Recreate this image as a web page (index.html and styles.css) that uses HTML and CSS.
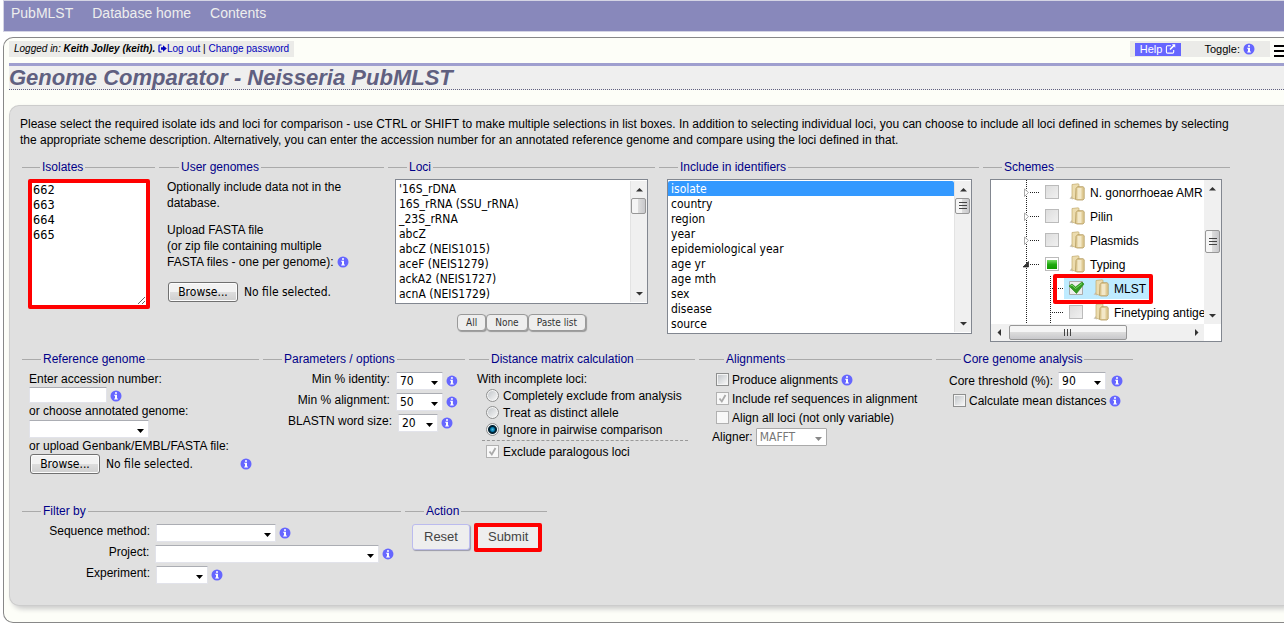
FILE: index.html
```html
<!DOCTYPE html>
<html lang="en">
<head>
<meta charset="utf-8">
<title>Genome Comparator - Neisseria PubMLST</title>
<link rel="stylesheet" href="styles.css">
</head>
<body>
<svg class="defs" aria-hidden="true">
  <symbol id="info" viewBox="0 0 12 12">
    <circle cx="6" cy="6" r="5.5" fill="#66f"/>
    <path d="M5 2.2h2v1.6H5zM4.2 4.8H7v3.8h.9v1H4.2v-1H5V5.8h-.8z" fill="#fff"/>
  </symbol>
  <symbol id="folder" viewBox="0 0 16 18">
    <path d="M3 13L.5 15.500 4 16.500z" fill="#c9c4b8"/>
    <path d="M3 1.500L9 .8q1 0 1 1V14l-3 2.500-4-1.500z" fill="#ecdcae" stroke="#c2a96c" stroke-width=".7"/>
    <path d="M7 5.500l1.500-1.800H14l1.200 1v11L14 17H7.500L6.500 16z" fill="#e0cb95" stroke="#b39a60" stroke-width=".8"/>
    <path d="M8.500 5h4v11h-4z" fill="#f3e8c8"/>
  </symbol>
  <symbol id="g-line" viewBox="0 0 24 24">
    <path d="M10.500 0v24" stroke="#222" stroke-dasharray="1 1"/>
  </symbol>
  <symbol id="g-leaf" viewBox="0 0 24 24">
    <path d="M10.500 0v24M12 12.500h11" stroke="#222" stroke-dasharray="1 1"/>
  </symbol>
  <symbol id="g-closed" viewBox="0 0 24 24">
    <path d="M10.500 0v24M14 12.500h9" stroke="#222" stroke-dasharray="1 1"/>
    <path d="M8.500 9l4 3.500-4 4z" fill="#fff" stroke="#aaa"/>
  </symbol>
  <symbol id="g-open" viewBox="0 0 24 24">
    <path d="M10.500 0v24M14 12.500h9" stroke="#222" stroke-dasharray="1 1"/>
    <path d="M12.500 9.500v5.500H7z" fill="#333" stroke="#111" stroke-width=".6"/>
  </symbol>
</svg>

<header class="topbar">
  <a href="#">PubMLST</a>
  <a href="#">Database home</a>
  <a href="#">Contents</a>
</header>

<main class="page">
  <div class="tools">
    <div class="login"><i>Logged in: <b>Keith Jolley (keith).</b></i>
      <a href="#"><svg class="exit" viewBox="0 0 9 9" aria-hidden="true"><path d="M3.500 1H1.800Q1 1 1 1.800v5.400Q1 8 1.800 8h1.700" fill="none" stroke="#00b" stroke-width="1.200"/><path d="M3 3.200h2V1.200L8.800 4.500 5 7.800v-2H3z" fill="#00b"/></svg>Log out</a> | <a href="#">Change password</a></div>
    <div class="toolset">
      <div class="helpbox">
        <a class="help" href="#">Help <svg class="ext" viewBox="0 0 11 11" aria-hidden="true"><path d="M6 2H2.200Q1 2 1 3.200v5.600Q1 10 2.200 10h5.600Q9 10 9 8.800V6.500" fill="none" stroke="#fff" stroke-width="1.200"/><path d="M7 .3h3.700V4L9.500 2.800 5.600 6.700l-1.300-1.300 3.900-3.900z" fill="#fff"/></svg></a>
        <span class="toggle">Toggle: <a href="#" aria-label="Toggle tooltips"><svg class="info"><use href="#info"/></svg></a></span>
      </div>
      <button class="menu" type="button" aria-label="Menu"><span></span><span></span><span></span></button>
    </div>
  </div>
  <h1>Genome Comparator - Neisseria PubMLST</h1>

  <form class="panel">
    <p class="intro">Please select the required isolate ids and loci for comparison - use CTRL or SHIFT to make multiple selections in list boxes. In addition to selecting individual loci, you can choose to include all loci defined in schemes by selecting the appropriate scheme description. Alternatively, you can enter the accession number for an annotated reference genome and compare using the loci defined in that.</p>

    <div class="row">
      <fieldset class="w-isolates">
        <legend>Isolates</legend>
        <textarea class="ids marked" aria-label="Isolates">662
663
664
665</textarea>
      </fieldset>

      <fieldset class="w-user">
        <legend>User genomes</legend>
        <p>Optionally include data not in the database.</p>
        <p>Upload FASTA file<br>(or zip file containing multiple<br>FASTA files - one per genome): <svg class="info"><use href="#info"/></svg></p>
        <div class="file"><input type="file" id="fasta"><label for="fasta">Browse...</label><span>No file selected.</span></div>
      </fieldset>

      <fieldset class="w-loci">
        <legend>Loci</legend>
        <div class="listbox">
          <select multiple size="8" aria-label="Loci">
            <option>'16S_rDNA</option><option>16S_rRNA (SSU_rRNA)</option><option>_23S_rRNA</option><option>abcZ</option><option>abcZ (NEIS1015)</option><option>aceF (NEIS1279)</option><option>ackA2 (NEIS1727)</option><option>acnA (NEIS1729)</option>
          </select>
          <div class="vbar"><i class="up"></i><i class="thumb plain"></i><i class="down"></i></div>
        </div>
        <div class="mini"><button type="button">All</button><button type="button">None</button><button type="button">Paste list</button></div>
      </fieldset>

      <fieldset class="w-ident">
        <legend>Include in identifiers</legend>
        <div class="listbox">
          <select multiple size="10" aria-label="Include in identifiers">
            <option selected>isolate</option><option>country</option><option>region</option><option>year</option><option>epidemiological year</option><option>age yr</option><option>age mth</option><option>sex</option><option>disease</option><option>source</option>
          </select>
          <div class="vbar"><i class="up"></i><i class="thumb"></i><i class="down"></i></div>
        </div>
      </fieldset>

      <fieldset class="w-schemes">
        <legend>Schemes</legend>
        <div class="treebox">
          <ul class="tree">
            <li><svg class="cell"><use href="#g-closed"/></svg><input type="checkbox" id="s1"><svg class="folder"><use href="#folder"/></svg><label for="s1">N. gonorrhoeae AMR</label></li>
            <li><svg class="cell"><use href="#g-closed"/></svg><input type="checkbox" id="s2"><svg class="folder"><use href="#folder"/></svg><label for="s2">Pilin</label></li>
            <li><svg class="cell"><use href="#g-closed"/></svg><input type="checkbox" id="s3"><svg class="folder"><use href="#folder"/></svg><label for="s3">Plasmids</label></li>
            <li><svg class="cell"><use href="#g-open"/></svg><input type="checkbox" id="s4" class="partial"><svg class="folder"><use href="#folder"/></svg><label for="s4">Typing</label></li>
            <li class="mlst"><svg class="cell"><use href="#g-line"/></svg><svg class="cell"><use href="#g-leaf"/></svg><span class="pick"><input type="checkbox" id="s5" checked><svg class="folder"><use href="#folder"/></svg><label for="s5">MLST</label></span></li>
            <li><svg class="cell"><use href="#g-line"/></svg><svg class="cell"><use href="#g-leaf"/></svg><input type="checkbox" id="s6"><svg class="folder"><use href="#folder"/></svg><label for="s6">Finetyping antige</label></li>
          </ul>
          <div class="vbar"><i class="up"></i><i class="thumb mid"></i><i class="down"></i></div>
          <div class="hbar"><i class="left"></i><i class="hthumb"></i><i class="right"></i></div>
        </div>
      </fieldset>
    </div>

    <div class="row">
      <fieldset class="w-ref">
        <legend>Reference genome</legend>
        <label for="acc">Enter accession number:</label>
        <div class="line short"><input type="text" class="text" id="acc"><svg class="info"><use href="#info"/></svg></div>
        <label for="ann">or choose annotated genome:</label>
        <select class="drop w120" id="ann"></select>
        <label for="gb">or upload Genbank/EMBL/FASTA file:</label>
        <div class="file"><input type="file" id="gb"><label for="gb">Browse...</label><span>No file selected.</span><svg class="info end"><use href="#info"/></svg></div>
      </fieldset>

      <fieldset class="w-params">
        <legend>Parameters / options</legend>
        <div class="line params"><label for="p1">Min % identity:</label><select class="drop w48" id="p1"><option>70</option></select><svg class="info"><use href="#info"/></svg></div>
        <div class="line params"><label for="p2">Min % alignment:</label><select class="drop w48" id="p2"><option>50</option></select><svg class="info"><use href="#info"/></svg></div>
        <div class="line params"><label for="p3">BLASTN word size:</label><select class="drop w40" id="p3"><option>20</option></select><svg class="info"><use href="#info"/></svg></div>
      </fieldset>

      <fieldset class="w-dist">
        <legend>Distance matrix calculation</legend>
        <div>With incomplete loci:</div>
        <div class="choice"><input type="radio" name="inc" id="r1"><label for="r1">Completely exclude from analysis</label></div>
        <div class="choice"><input type="radio" name="inc" id="r2"><label for="r2">Treat as distinct allele</label></div>
        <div class="choice"><input type="radio" name="inc" id="r3" checked><label for="r3">Ignore in pairwise comparison</label></div>
        <div class="choice parted"><input type="checkbox" id="c1" checked disabled><label for="c1">Exclude paralogous loci</label></div>
      </fieldset>

      <fieldset class="w-align">
        <legend>Alignments</legend>
        <div class="choice tall"><input type="checkbox" id="a1"><label for="a1">Produce alignments</label><svg class="info"><use href="#info"/></svg></div>
        <div class="choice tall"><input type="checkbox" id="a2" checked disabled><label for="a2">Include ref sequences in alignment</label></div>
        <div class="choice tall"><input type="checkbox" id="a3" disabled><label for="a3">Align all loci (not only variable)</label></div>
        <div class="line aligner"><label for="a4">Aligner:</label><select class="drop w71" id="a4" disabled><option>MAFFT</option></select></div>
      </fieldset>

      <fieldset class="w-core">
        <legend>Core genome analysis</legend>
        <div class="line core"><label for="k1">Core threshold (%):</label><select class="drop w48" id="k1"><option>90</option></select><svg class="info"><use href="#info"/></svg></div>
        <div class="choice tall"><input type="checkbox" id="k2"><label for="k2">Calculate mean distances</label><svg class="info"><use href="#info"/></svg></div>
      </fieldset>
    </div>

    <div class="row last">
      <fieldset class="w-filter">
        <legend>Filter by</legend>
        <div class="line filter"><label for="f1">Sequence method:</label><select class="drop w120" id="f1"></select><svg class="info"><use href="#info"/></svg></div>
        <div class="line filter"><label for="f2">Project:</label><select class="drop w225" id="f2"></select><svg class="info"><use href="#info"/></svg></div>
        <div class="line filter"><label for="f3">Experiment:</label><select class="drop w52" id="f3"></select><svg class="info"><use href="#info"/></svg></div>
      </fieldset>
      <fieldset class="w-action">
        <legend>Action</legend>
        <div class="actions"><button type="reset">Reset</button><button type="submit" class="marked">Submit</button></div>
      </fieldset>
    </div>
  </form>
</main>
</body>
</html>
```
FILE: styles.css
```css
*, *::after { box-sizing: border-box; }

body {
  margin: 0;
  padding: 0 0 11px 3px;
  overflow-x: hidden;
  background: #fff;
  color: #000;
  font: 12px/16px "Liberation Sans", Arial, sans-serif;
}

a { color: #00b; text-decoration: none; }
p { margin: 0; }
.defs { position: absolute; width: 0; height: 0; }

.topbar {
  display: flex;
  gap: 19px;
  height: 32px;
  padding: 4px 7px;
  border: 1px solid #d4d4e4;
  border-right: 0;
  background: #88b;
  font-size: 14px;
}
.topbar a { color: #eee; }

.page {
  margin-top: 5px;
  padding: 3px 0 16px 5px;
  border: 1px solid #888;
  border-right: 0;
  border-radius: 10px 0 0 10px;
  background: #fdfef8;
}

.tools {
  display: flex;
  justify-content: space-between;
  height: 22px;
}
.login, .helpbox { height: 16px; padding: 0 5px; background: #ebebe8; white-space: nowrap; }
.login { font-size: 10px; }
.exit { width: 9px; height: 9px; vertical-align: -1px; }
.toolset { display: flex; gap: 4px; font-size: 11px; }
.helpbox { display: flex; align-items: center; gap: 23px; padding-right: 15px; }
.help { height: 13px; padding: 0 5px; background: #66f; color: #fff; line-height: 13px; }
.ext { width: 11px; height: 10px; vertical-align: -1px; }

.menu {
  display: flex;
  flex-direction: column;
  gap: 3px;
  width: 10px;
  margin: 0;
  padding: 4px 0 0;
  border: 0;
  background: none;
}
.menu span { height: 2px; background: #000; }

h1 {
  margin: 0 0 15px;
  border-top: 3px solid #9f9fcf;
  border-bottom: 1px dotted #606080;
  background: #efefef;
  color: #606080;
  font: italic bold 22px/23px "Liberation Sans", Arial, sans-serif;
}

.panel {
  padding: 10px 16px 19px 10px;
  border: 1px solid #ccc;
  border-right: 0;
  border-radius: 10px 0 0 10px;
  background: #e0e0e0;
  box-shadow: 3px 3px 5px #ccc;
}
.intro { margin-bottom: 11px; padding-right: 8px; text-wrap: wrap; padding-right: 24px; }

.row { display: flex; align-items: flex-start; gap: 4px; margin: 0 0 9px 2px; }
.row.last { margin: 29px 0 0 2px; }

fieldset {
  flex: none;
  min-width: 0;
  margin: 0;
  padding: 4px 7px 0;
  border: 0 solid #aaa;
  border-top-width: 1px;
}
legend { margin-left: 12px; padding: 0 2px; color: #008; }

.w-isolates { width: 133px; padding-left: 6px; }
.w-user { width: 225px; }
.w-loci { width: 267px; }
.w-ident { width: 320px; }
.w-schemes { width: 247px; }
.w-ref { width: 237px; }
.w-params { width: 202px; }
.w-dist { width: 226px; }
.w-align { width: 233px; padding: 3px 7px 0 13px; }
.w-core { width: 197px; padding-left: 13px; }
.w-filter { width: 379px; }
.w-action { width: 142px; }

.info { width: 12px; height: 12px; vertical-align: -2px; }

.marked { border: 4px solid #f00; border-radius: 2px; }

.ids {
  display: block;
  width: 122px;
  height: 130px;
  padding: 0 1px;
  background: #fff;
  font: 12px/15px "DejaVu Sans Mono", monospace;
}

.w-user { padding: 4px 8px 0; }
.w-user p { margin-bottom: 11px; }

.file {
  position: relative;
  display: flex;
  align-items: center;
  height: 20px;
  font: 12px/16px "DejaVu Sans Condensed", "Noto Sans", sans-serif;
}
.w-user .file { margin-top: 12px; }
.file input { position: absolute; width: 1px; height: 1px; opacity: 0; }
.file label {
  width: 70px;
  margin: 0 6px 0 1px;
  border: 1px solid #707070;
  border-radius: 3px;
  background: linear-gradient(#f2f2f2 0 50%, #ddd 50%, #cfcfcf);
  box-shadow: inset 0 0 0 1px #fcfcfc;
  line-height: 18px;
  text-align: center;
}
.end { margin-left: auto; }

.listbox {
  display: flex;
  margin: 0 0 0 1px;
  padding: 1px 0;
  border: 1px solid #828790;
  background: #fff;
}
.w-loci .listbox { margin: 0; }
.listbox select {
  flex: 1;
  min-width: 0;
  margin: 0;
  padding: 0;
  border: 0;
  outline: 0;
  overflow: hidden;
  background: #fff;
  font: 12px/15px "DejaVu Sans Condensed", "Noto Sans", sans-serif;
}
.w-loci select { height: 121px; }
.w-ident select { height: 151px; }
.listbox option { height: 15px; min-height: 15px; padding: 1px 3px 0; line-height: 15px; color: #000; }
.listbox option:checked { background: linear-gradient(#39f, #39f); -webkit-text-fill-color: #fff; }

.vbar {
  display: flex;
  flex-direction: column;
  width: 17px;
  border-left: 1px solid #e3e3e3;
  background: #f0f0f0;
}
.up, .down, .left, .right { flex: none; width: 16px; height: 17px; background: center / 7px 7px no-repeat; }
.up { background-image: url("data:image/svg+xml,%3Csvg xmlns='http://www.w3.org/2000/svg' viewBox='0 0 7 7'%3E%3Cpath d='M0 5.500L3.500 2 7 5.500z' fill='%23333'/%3E%3C/svg%3E"); }
.down { margin-top: auto; background-image: url("data:image/svg+xml,%3Csvg xmlns='http://www.w3.org/2000/svg' viewBox='0 0 7 7'%3E%3Cpath d='M0 2L3.500 5.500 7 2z' fill='%23333'/%3E%3C/svg%3E"); }
.left { background-image: url("data:image/svg+xml,%3Csvg xmlns='http://www.w3.org/2000/svg' viewBox='0 0 7 7'%3E%3Cpath d='M5 0L1.500 3.500 5 7z' fill='%23333'/%3E%3C/svg%3E"); }
.right { margin-left: auto; background-image: url("data:image/svg+xml,%3Csvg xmlns='http://www.w3.org/2000/svg' viewBox='0 0 7 7'%3E%3Cpath d='M2 0L5.500 3.500 2 7z' fill='%23333'/%3E%3C/svg%3E"); }
.thumb, .hthumb {
  flex: none;
  width: 15px;
  height: 16px;
  border: 1px solid #979797;
  border-radius: 2px;
  background: url("data:image/svg+xml,%3Csvg xmlns='http://www.w3.org/2000/svg' viewBox='0 0 8 8'%3E%3Cpath d='M0 .5h8M0 3.500h8M0 6.500h8' stroke='%23444'/%3E%3C/svg%3E") center / 8px 8px no-repeat, linear-gradient(90deg, #f5f5f5 0 45%, #dcdcdc 50%, #c8c8cb);
}
.plain { background: linear-gradient(90deg, #f5f5f5 0 45%, #dcdcdc 50%, #c8c8cb); }
.mid { height: 23px; margin-top: 33px; }

.mini { display: flex; justify-content: center; margin-top: 10px; }
.mini button {
  height: 17px;
  margin: 0;
  padding: 0 8px;
  border: 1px solid #999;
  border-radius: 4px;
  background: #eee;
  box-shadow: 1px 1px 1px #999;
  color: #333;
  font: 10px/14px "DejaVu Sans Condensed", "Noto Sans", sans-serif;
}

.treebox {
  display: grid;
  grid-template-columns: 1fr 17px;
  grid-template-rows: 144px 17px;
  width: 232px;
  border: 1px solid #828790;
  background: #fff;
}
.tree { margin: 0; padding: 0 0 0 25px; overflow: hidden; list-style: none; }
.tree li { display: flex; align-items: center; height: 24px; white-space: nowrap; }
.tree .cell { flex: none; width: 24px; height: 24px; }
.tree input { margin: 0 10px 0 5px; }
.tree label { padding-top: 1px; }
.folder { flex: none; width: 16px; height: 18px; margin-right: 5px; }
.pick { display: flex; align-items: center; height: 22px; padding-right: 6px; background: #beebff; }
.mlst { position: relative; }
.mlst::after {
  content: "";
  position: absolute;
  left: 37px;
  top: -2px;
  width: 100px;
  height: 30px;
  border: 4px solid #f00;
  border-radius: 2px;
  pointer-events: none;
}
.treebox .vbar { border: 0; align-items: center; }
.hbar { display: flex; align-items: center; background: #f0f0f0; }
.hthumb {
  width: 118px;
  height: 15px;
  margin-left: 2px;
  background: url("data:image/svg+xml,%3Csvg xmlns='http://www.w3.org/2000/svg' viewBox='0 0 8 8'%3E%3Cpath d='M.5 0v7M3.500 0v7M6.500 0v7' stroke='%23444'/%3E%3C/svg%3E") center / 8px 8px no-repeat, linear-gradient(#f5f5f5 0 45%, #dcdcdc 50%, #c8c8cb);
}

input[type="checkbox"], input[type="radio"] {
  flex: none;
  width: 13px;
  height: 13px;
  appearance: none;
  border: 1px solid #8e8f8f;
  background: linear-gradient(135deg, #c3c7cb, #f6f6f6) content-box, #f4f4f4;
  padding: 1px;
}
input[type="checkbox"]:disabled { border-color: #b1b1b1; background: #f8f8f8; }
input[type="checkbox"]:checked:disabled {
  background: #f8f8f8 url("data:image/svg+xml,%3Csvg xmlns='http://www.w3.org/2000/svg' viewBox='0 0 11 11'%3E%3Cpath d='M2.500 5.500l2.300 3L8.500 2' fill='none' stroke='%23aaa' stroke-width='1.800'/%3E%3C/svg%3E") center / 11px 11px no-repeat;
}
input[type="radio"] { border-radius: 50%; }
input[type="radio"]:checked { background: radial-gradient(circle at center, #5bd 0, #07a 2px, #023 3px, #023 4px, #f4f4f4 5px); }
.tree input[type="checkbox"] { width: 14px; height: 14px; border-color: #bbb; background: linear-gradient(135deg, #ddd, #f0f0f0); }
.tree input[type="checkbox"].partial {
  background: linear-gradient(#7d6, #2a1 50%, #190) center / 10px 9px no-repeat, #fff;
}
.tree input[type="checkbox"]:checked {
  width: 16px;
  margin: 0 8px 0 5px;
  border-color: transparent;
  background: url("data:image/svg+xml,%3Csvg xmlns='http://www.w3.org/2000/svg' viewBox='0 0 16 14'%3E%3Cpath d='M.5.5h13v13H.5z' fill='%23eee' stroke='%23aaa'/%3E%3Cpath d='M0 5l3-2 3.500 3L13 1l2 2-7.500 9.500z' fill='%23392' stroke='%23281' stroke-width='.6'/%3E%3Cpath d='M1.500 5l1.500-.8L6.500 7.500 13 2.500' fill='none' stroke='%237d6'/%3E%3C/svg%3E") border-box center / 16px 14px no-repeat;
}

.line { display: flex; gap: 6px; }
.line .info { margin-top: 4px; }
.text { width: 78px; height: 16px; padding: 0 2px; border: 1px solid #e2e3ea; border-top-color: #abadb3; background: #fff; }
.line.short { gap: 3px; }
.short .info { margin: 3px 0 0; }

.drop {
  display: block;
  height: 18px;
  margin: 1px 0 0;
  padding: 0 3px;
  appearance: none;
  border: 1px solid #e2e3ea;
  border-top-color: #abadb3;
  border-radius: 1px;
  background: #fff url("data:image/svg+xml,%3Csvg xmlns='http://www.w3.org/2000/svg' viewBox='0 0 7 4'%3E%3Cpath d='M0 0h7L3.500 4z'/%3E%3C/svg%3E") right 4px bottom 4px / 7px 4px no-repeat;
  color: #000;
  font: 12px/16px "DejaVu Sans Condensed", "Noto Sans", sans-serif;
}
.drop:disabled {
  border-color: #aaa;
  background-image: url("data:image/svg+xml,%3Csvg xmlns='http://www.w3.org/2000/svg' viewBox='0 0 7 4'%3E%3Cpath d='M0 0h7L3.500 4z' fill='%23888'/%3E%3C/svg%3E");
  color: #777;
  opacity: 1;
}
.w120 { width: 120px; }
.w225 { width: 225px; }
.w71 { width: 71px; }
.w52 { width: 52px; }
.w48 { width: 48px; }
.w40 { width: 40px; }

.w-ref label { display: block; }
.params, .filter { height: 21px; gap: 3px; }
.params label { width: 122px; margin-right: 3px; text-align: right; }
.filter label { width: 121px; margin-right: 3px; text-align: right; }

.w-dist { padding-left: 8px; }
.choice { display: flex; align-items: center; gap: 4px; height: 17px; }
.choice input { margin: 0; }
.w-dist .choice { padding-left: 9px; }
.w-dist .parted { height: 22px; margin: 2px 0 0 5px; padding-left: 4px; border-top: 1px dashed #999; }
.choice.tall { height: 19px; padding-left: 4px; gap: 3px; }
.aligner { gap: 3px; }
.aligner label { padding-top: 2px; }
.line.core { gap: 5px; height: 20px; }
.core label { padding-top: 2px; }

.actions { display: flex; gap: 4px; }
.actions button {
  height: 26px;
  margin: 1px 0 0;
  padding: 0 11px;
  border: 1px solid #bbe;
  border-radius: 3px;
  background: #eee;
  box-shadow: 1px 1px 1px #99a;
  color: #444;
  font: 13px/16px "Liberation Sans", Arial, sans-serif;
}
.actions .marked { height: 29px; margin: 0; padding: 0 10px 2px; border: 4px solid #f00; border-radius: 2px; box-shadow: none; }
```
